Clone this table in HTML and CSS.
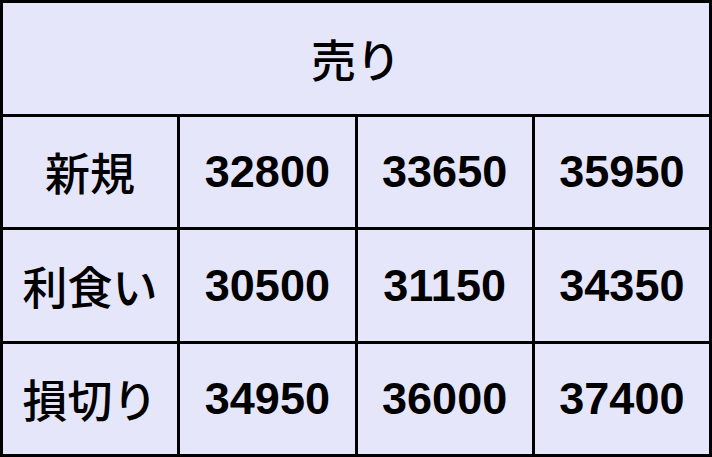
FILE: index.html
```html
<!DOCTYPE html>
<html lang="ja">
<head>
<meta charset="utf-8">
<title>売り</title>
<link rel="stylesheet" href="styles.css">
</head>
<body>
<div class="sheet">
  <div class="cell head jp">売り</div>
  <div class="cell jp">新規</div>
  <div class="cell">32800</div>
  <div class="cell">33650</div>
  <div class="cell">35950</div>
  <div class="cell jp">利食い</div>
  <div class="cell">30500</div>
  <div class="cell">31150</div>
  <div class="cell">34350</div>
  <div class="cell jp">損切り</div>
  <div class="cell">34950</div>
  <div class="cell">36000</div>
  <div class="cell">37400</div>
</div>
</body>
</html>
```
FILE: styles.css
```css
html, body {
  margin: 0;
  padding: 0;
  background: #e6e6fa;
}
.sheet {
  box-sizing: border-box;
  width: 712px;
  height: 457px;
  display: grid;
  grid-template-columns: repeat(4, 1fr);
  grid-template-rows: repeat(4, 1fr);
  gap: 3px;
  padding: 3px;
  background: #000;
  font-family: "Liberation Sans", "Noto Sans CJK JP", sans-serif;
  font-weight: bold;
  font-size: 45px;
  color: #000;
}
.cell {
  background: #e6e6fa;
  display: flex;
  align-items: center;
  justify-content: center;
  line-height: 1;
}
.jp {
  font-family: "Noto Sans CJK JP", sans-serif;
  font-weight: 500;
}
.head {
  grid-column: 1 / -1;
}
```
